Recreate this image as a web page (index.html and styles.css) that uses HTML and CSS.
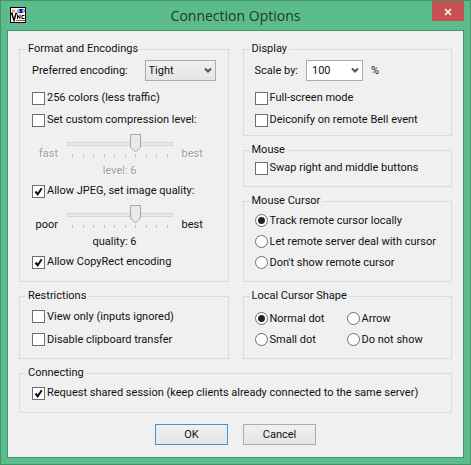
FILE: index.html
```html
<!doctype html>
<html lang="en">
  <head>
    <meta charset="UTF-8" />
    <meta name="viewport" content="width=device-width, initial-scale=1.0" />
    <title>Connection Options</title>
    <link rel="stylesheet" href="styles.css">
  </head>
  <body>
    <div class="window">
      <header class="titlebar">
        <svg class="app-icon" viewBox="0 0 16 16" aria-hidden="true">
          <rect x="0.5" y="0.5" width="15" height="15" fill="#fff" stroke="#000" />
          <path d="M2 2.500l3 3M5 2.500l-3 3" stroke="#c44" fill="none" />
          <path d="M7 4l2-1.500h4L15 4l-2 1.500H9z" fill="#fff" stroke="#000" stroke-width="0.600" />
          <rect x="9.500" y="2" width="3" height="4" fill="#11b" />
          <path d="M1 6.500h2M1.800 6.500L4 13.500l2-7h1.500" fill="none" stroke="#000" stroke-width="1.400" />
          <path d="M7.500 12V8l2.500 3.500V7.500M14.500 8.500h-2.500v3h2.500" fill="none" stroke="#000" />
          <path d="M6 13.500h9" stroke="#d33" />
        </svg>
        <h1>Connection Options</h1>
        <button class="close" type="button" aria-label="Close">
          <svg viewBox="0 0 8 8" aria-hidden="true"><path d="M1 1l6 6M7 1l-6 6" /></svg>
        </button>
      </header>

      <form class="client">
        <div class="columns">
          <div class="column">
            <fieldset class="group grow">
              <legend>Format and Encodings</legend>
              <div class="content">
                <div class="field between">
                  <label for="encoding">Preferred encoding:</label>
                  <span class="select">
                    <select id="encoding"><option>Tight</option></select>
                    <svg viewBox="0 0 8 7" aria-hidden="true"><path d="M1 1.500l3 3 3-3" /></svg>
                  </span>
                </div>
                <label class="row"><input type="checkbox" />256 colors (less traffic)</label>
                <label class="row"><input type="checkbox" />Set custom compression level:</label>
                <div class="slider disabled">
                  <span class="low">fast</span>
                  <div class="track">
                    <input type="range" min="0" max="9" value="6" aria-label="Compression level" disabled />
                    <div class="ticks"><i></i><i></i><i></i><i></i><i></i><i></i><i></i><i></i><i></i><i></i></div>
                  </div>
                  <span class="high">best</span>
                  <output>level: 6</output>
                </div>
                <label class="row"><input type="checkbox" checked />Allow JPEG, set image quality:</label>
                <div class="slider">
                  <span class="low">poor</span>
                  <div class="track">
                    <input type="range" min="0" max="9" value="6" aria-label="Image quality" />
                    <div class="ticks"><i></i><i></i><i></i><i></i><i></i><i></i><i></i><i></i><i></i><i></i></div>
                  </div>
                  <span class="high">best</span>
                  <output>quality: 6</output>
                </div>
                <label class="row"><input type="checkbox" checked />Allow CopyRect encoding</label>
              </div>
            </fieldset>

            <fieldset class="group">
              <legend>Restrictions</legend>
              <div class="content restrictions">
                <label class="row"><input type="checkbox" />View only (inputs ignored)</label>
                <label class="row"><input type="checkbox" />Disable clipboard transfer</label>
              </div>
            </fieldset>
          </div>

          <div class="column side">
            <fieldset class="group">
              <legend>Display</legend>
              <div class="content">
                <div class="field">
                  <label for="scale">Scale by:</label>
                  <span class="select combo">
                    <select id="scale"><option>100</option></select>
                    <svg viewBox="0 0 8 7" aria-hidden="true"><path d="M1 1.500l3 3 3-3" /></svg>
                  </span>
                  <span>%</span>
                </div>
                <label class="row"><input type="checkbox" />Full-screen mode</label>
                <label class="row"><input type="checkbox" />Deiconify on remote Bell event</label>
              </div>
            </fieldset>

            <fieldset class="group">
              <legend>Mouse</legend>
              <div class="content mouse">
                <label class="row"><input type="checkbox" />Swap right and middle buttons</label>
              </div>
            </fieldset>

            <fieldset class="group">
              <legend>Mouse Cursor</legend>
              <div class="content cursor">
                <label class="row"><input type="radio" name="cursor" checked />Track remote cursor locally</label>
                <label class="row"><input type="radio" name="cursor" />Let remote server deal with cursor</label>
                <label class="row"><input type="radio" name="cursor" />Don't show remote cursor</label>
              </div>
            </fieldset>

            <fieldset class="group">
              <legend>Local Cursor Shape</legend>
              <div class="content shape">
                <label class="row"><input type="radio" name="shape" checked />Normal dot</label>
                <label class="row"><input type="radio" name="shape" />Arrow</label>
                <label class="row"><input type="radio" name="shape" />Small dot</label>
                <label class="row"><input type="radio" name="shape" />Do not show</label>
              </div>
            </fieldset>
          </div>
        </div>

        <fieldset class="group">
          <legend>Connecting</legend>
          <div class="content connecting">
            <label class="row"><input type="checkbox" checked />Request shared session (keep clients already connected to the same server)</label>
          </div>
        </fieldset>

        <div class="actions">
          <button class="button default" type="button">OK</button>
          <button class="button" type="button">Cancel</button>
        </div>
      </form>
    </div>
  </body>
</html>
```

FILE: styles.css
```css
:root {
  --frame: #5cbb8a;
  --frame-dark: #44936b;
  --face: #f0f0f0;
  --line: #dcdcdc;
  --text: #111;
  --text-disabled: #a0a0a0;
}

* {
  box-sizing: border-box;
}

body {
  margin: 0;
  font-family: Roboto, sans-serif;
  font-size: 11px;
  line-height: 14px;
  color: var(--text);
}

.window {
  min-height: 100vh;
  display: flex;
  flex-direction: column;
  padding: 0 6px 6px;
  background: var(--frame);
  border: 1px solid var(--frame-dark);
}

.titlebar {
  display: grid;
  grid-template-columns: 32px 1fr 32px;
  height: 29px;
}

.app-icon {
  width: 16px;
  height: 16px;
  margin: 6px 0 0 3px;
}

h1 {
  margin: 0;
  font-family: "Open Sans", sans-serif;
  font-size: 14px;
  font-weight: 400;
  line-height: 29px;
  text-align: center;
  color: #1d3b2c;
}

.close {
  height: 20px;
  padding: 0;
  border: 0;
  background: #c75050;
}

.close svg {
  width: 8px;
  height: 8px;
  stroke: #fff;
  stroke-width: 1.6;
}

.client {
  flex: 1;
  padding: 11px;
  background: var(--face);
  border: 1px solid var(--frame-dark);
}

.columns {
  display: grid;
  grid-template-columns: repeat(2, minmax(0, 1fr));
  gap: 14px;
  margin-bottom: 7px;
}

.column {
  display: flex;
  flex-direction: column;
  gap: 7px;
}

.group {
  min-width: 0;
  margin: 0;
  padding: 0;
  border: 1px solid var(--line);
}

.grow {
  flex: 1;
}

legend {
  margin-left: 6px;
  padding: 0 2px;
}

.content {
  padding: 4px 12px;
}

.side .content {
  padding-left: 11px;
}

.field {
  display: flex;
  align-items: center;
  gap: 8px;
  margin-bottom: 6px;
}

.between {
  justify-content: space-between;
}

.select {
  display: grid;
  align-items: center;
  width: 71px;
}

.select select,
.select svg {
  grid-area: 1 / 1;
}

.select select {
  appearance: none;
  width: 100%;
  height: 21px;
  padding: 0 3px;
  border: 1px solid #acacac;
  border-radius: 0;
  background: linear-gradient(#f0f0f0, #e5e5e5);
  font: inherit;
  color: inherit;
}

.select svg {
  justify-self: end;
  width: 8px;
  height: 7px;
  margin-right: 4px;
  fill: none;
  stroke: #555;
  stroke-width: 2;
  pointer-events: none;
}

.combo {
  width: 57px;
}

.combo select {
  padding: 0 5px;
  background: #fff;
}

.row {
  display: flex;
  align-items: center;
  gap: 2px;
  height: 22px;
  white-space: nowrap;
}

.row input {
  appearance: none;
  flex: none;
  width: 13px;
  height: 13px;
  margin: 0;
  border: 1px solid #6e6e6e;
  background: #fff;
}

.row input[type="checkbox"]:checked {
  background: #fff url("data:image/svg+xml,%3Csvg xmlns='http://www.w3.org/2000/svg' viewBox='0 0 11 11'%3E%3Cpath d='M2.500 5.500l2.200 2.700 4-6' fill='none' stroke='%23111' stroke-width='2'/%3E%3C/svg%3E");
}

.row input[type="radio"] {
  border-radius: 50%;
}

.row input[type="radio"]:checked {
  background: radial-gradient(circle, #222 3px, #fff 4px);
}

.slider {
  display: grid;
  grid-template-columns: 26px 1fr 34px;
  column-gap: 9px;
  padding-top: 3px;
  height: 49px;
}

.slider span {
  align-self: end;
  padding-bottom: 1px;
}

.slider .low {
  text-align: right;
}

.slider output {
  grid-column: 1 / 3;
  padding: 2px 36px 0 0;
  text-align: right;
}

.disabled {
  color: var(--text-disabled);
  text-shadow: 1px 1px #fff;
}

.track {
  height: 26px;
}

.track input {
  appearance: none;
  display: block;
  width: 100%;
  height: 19px;
  margin: 0;
  background: none;
}

.track input::-webkit-slider-runnable-track {
  height: 4px;
  border: 1px solid #d6d6d6;
  background: #e7eaea;
}

.track input::-webkit-slider-thumb {
  appearance: none;
  width: 11px;
  height: 19px;
  margin-top: -9px;
  background: url("data:image/svg+xml,%3Csvg xmlns='http://www.w3.org/2000/svg' viewBox='0 0 11 19'%3E%3Cpath d='M.5.5h10v12.500l-5 5-5-5z' fill='%23eaeaea' stroke='%23a6a6a6'/%3E%3C/svg%3E");
}

.ticks {
  display: flex;
  justify-content: space-between;
  padding: 1px 5px 0;
}

.ticks i {
  width: 1px;
  height: 3px;
  background: #c4c4c4;
}

.mouse {
  padding-top: 0;
  padding-bottom: 7px;
}

.restrictions {
  padding-top: 2px;
  padding-bottom: 7px;
}

.restrictions .row {
  height: 23px;
}

.cursor {
  padding-top: 2px;
  padding-bottom: 8px;
}

.cursor .row,
.shape .row {
  height: 21px;
}

.shape {
  display: grid;
  grid-template-columns: 92px 1fr;
  padding-top: 5px;
  padding-bottom: 8px;
}

.connecting {
  padding-top: 2px;
  padding-bottom: 8px;
}

.actions {
  display: flex;
  justify-content: center;
  gap: 15px;
  margin-top: 11px;
}

.button {
  width: 73px;
  height: 21px;
  padding: 0;
  border: 1px solid #acacac;
  background: linear-gradient(#f0f0f0, #e5e5e5);
  font: inherit;
  color: inherit;
}

.default {
  border-color: #3c95dc;
}
```
